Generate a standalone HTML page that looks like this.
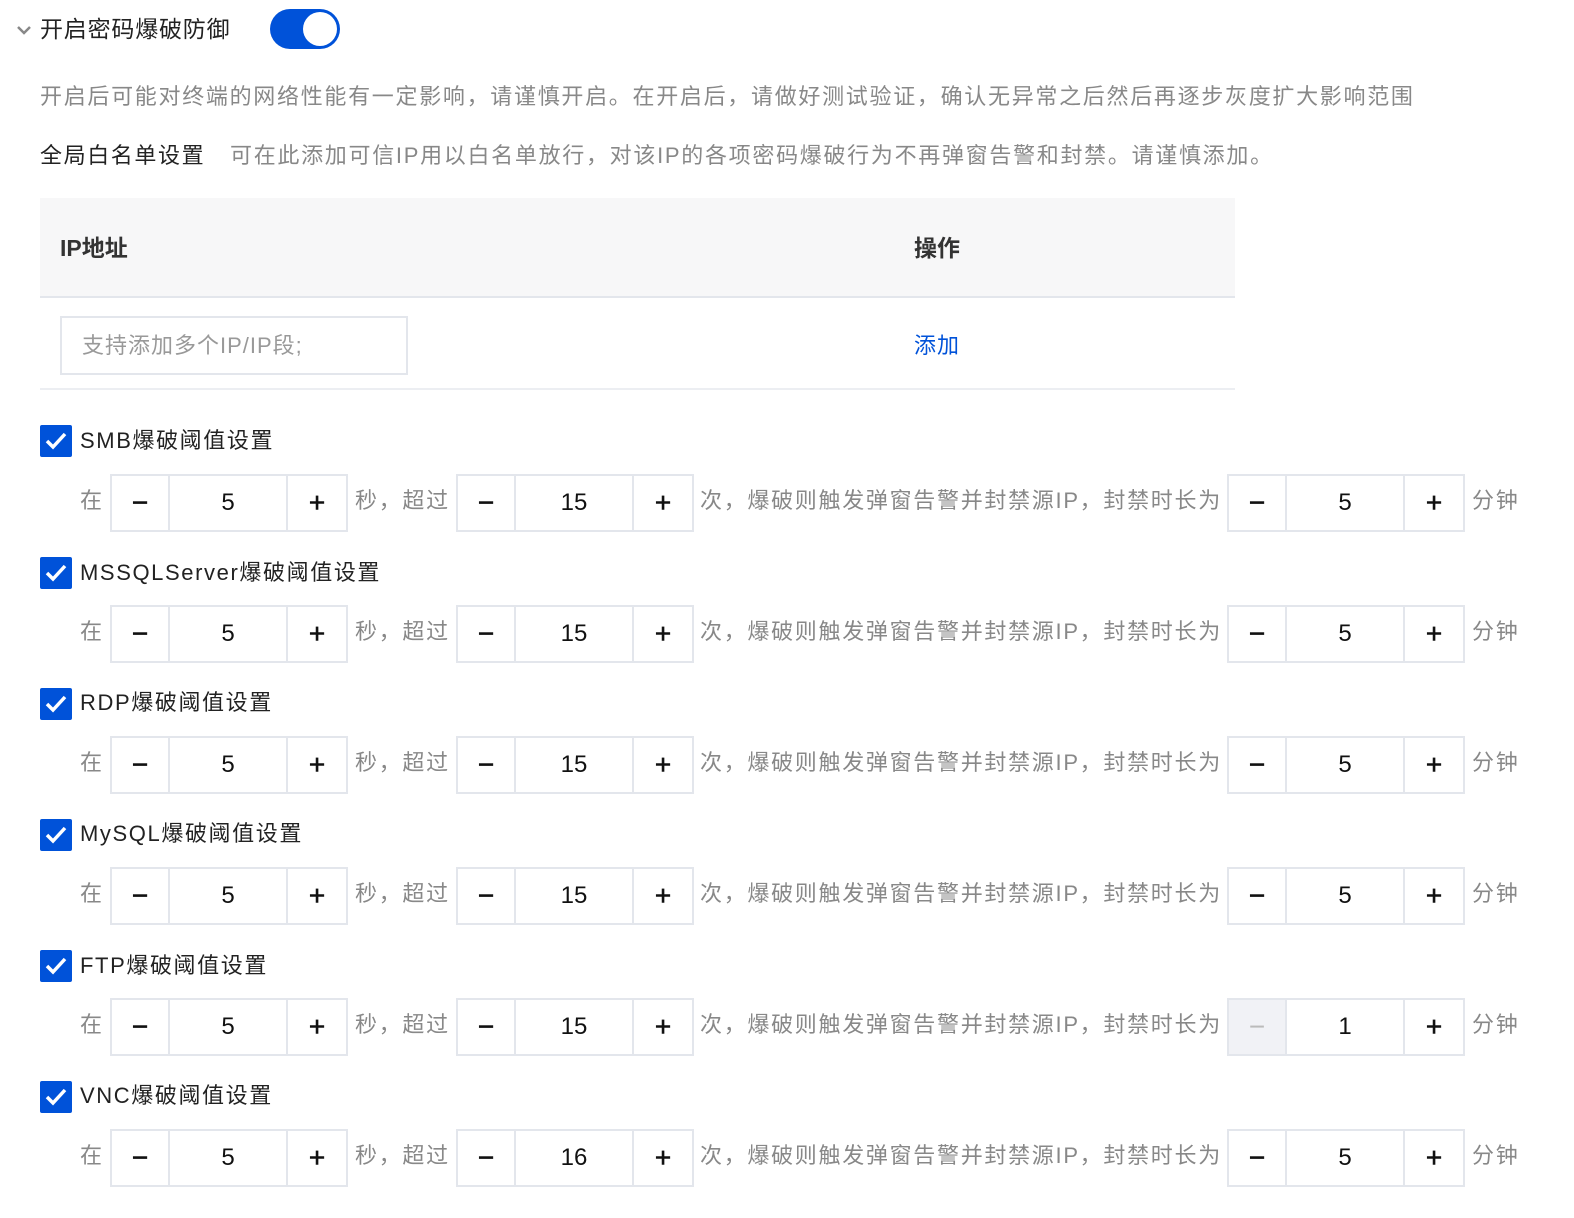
<!DOCTYPE html>
<html><head><meta charset="utf-8">
<style>
*{margin:0;padding:0;box-sizing:border-box}
body{width:1574px;height:1218px;background:#fff;font-family:"Liberation Sans","Noto Sans CJK SC",sans-serif;position:relative;overflow:hidden;color:#222}
.a{position:absolute;white-space:nowrap}
.g{color:#888;font-size:22px;line-height:30px;letter-spacing:1.7px}
.st{position:absolute;height:58px;width:238px;border:2px solid #e3e6ec;display:flex;background:#fff}
.st div{display:flex;align-items:center;justify-content:center;font-size:24px;color:#111}
.st .m,.st .p{font-size:28px;font-weight:500;-webkit-text-stroke:0.6px #111}
.st .m{width:58px;border-right:2px solid #e3e6ec}
.st .v{width:118px;border-right:2px solid #e3e6ec}
.st .p{width:58px}
.st .dis{background:#f1f2f6;color:#bbb;-webkit-text-stroke:0}
.cb{position:absolute;left:40px;width:32px;height:32px;background:#0052d9;border-radius:2px}
.cb svg{position:absolute;left:5px;top:6px}
.lab{position:absolute;left:80px;font-size:22px;line-height:30px;color:#222;letter-spacing:1.6px}
</style></head><body>
<svg class="a" style="left:16px;top:24px" width="16" height="12" viewBox="0 0 16 12"><path d="M2 3 L8 9 L14 3" stroke="#888" stroke-width="2.5" fill="none"/></svg>
<div class="a" style="left:40px;top:14px;font-size:23px;line-height:30px;color:#222;letter-spacing:0.8px">开启密码爆破防御</div>
<div class="a" style="left:270px;top:9px;width:70px;height:40px;border-radius:20px;background:#0052d9"></div>
<div class="a" style="left:303px;top:12px;width:34px;height:34px;border-radius:17px;background:#fff"></div>
<div class="a g" style="left:40px;top:82px">开启后可能对终端的网络性能有一定影响，请谨慎开启。在开启后，请做好测试验证，确认无异常之后然后再逐步灰度扩大影响范围</div>
<div class="a" style="left:40px;top:141px;font-size:22px;line-height:30px;color:#222;letter-spacing:1.6px">全局白名单设置</div>
<div class="a g" style="left:230px;top:141px">可在此添加可信IP用以白名单放行，对该IP的各项密码爆破行为不再弹窗告警和封禁。请谨慎添加。</div>
<div class="a" style="left:40px;top:198px;width:1195px;height:100px;background:#f7f7f8;border-bottom:2px solid #e3e6ec"></div>
<div class="a" style="left:60px;top:233px;font-size:23px;line-height:30px;font-weight:bold;color:#333">IP地址</div>
<div class="a" style="left:914px;top:233px;font-size:23px;line-height:30px;font-weight:bold;color:#333">操作</div>
<div class="a" style="left:60px;top:316px;width:348px;height:59px;border:2px solid #e3e6ec"></div>
<div class="a g" style="left:82px;top:331px;color:#999;letter-spacing:1px">支持添加多个IP/IP段;</div>
<div class="a" style="left:914px;top:331px;font-size:22px;line-height:30px;color:#0052d9;letter-spacing:1px">添加</div>
<div class="a" style="left:40px;top:388px;width:1195px;height:2px;background:#eceef2"></div>

<div class="cb" style="top:425px"><svg width="22" height="20" viewBox="0 0 22 20"><path d="M2 10 L8 16 L20 3" stroke="#fff" stroke-width="3.5" fill="none"/></svg></div>
<div class="lab" style="top:426px">SMB爆破阈值设置</div>
<div class="a g" style="left:80px;top:486px">在</div>
<div class="st" style="left:110px;top:474px"><div class="m">−</div><div class="v">5</div><div class="p">+</div></div>
<div class="a g" style="left:355px;top:486px">秒，超过</div>
<div class="st" style="left:456px;top:474px"><div class="m">−</div><div class="v">15</div><div class="p">+</div></div>
<div class="a g" style="left:700px;top:486px">次，爆破则触发弹窗告警并封禁源IP，封禁时长为</div>
<div class="st" style="left:1227px;top:474px"><div class="m">−</div><div class="v">5</div><div class="p">+</div></div>
<div class="a g" style="left:1472px;top:486px">分钟</div>

<div class="cb" style="top:557px"><svg width="22" height="20" viewBox="0 0 22 20"><path d="M2 10 L8 16 L20 3" stroke="#fff" stroke-width="3.5" fill="none"/></svg></div>
<div class="lab" style="top:558px">MSSQLServer爆破阈值设置</div>
<div class="a g" style="left:80px;top:617px">在</div>
<div class="st" style="left:110px;top:605px"><div class="m">−</div><div class="v">5</div><div class="p">+</div></div>
<div class="a g" style="left:355px;top:617px">秒，超过</div>
<div class="st" style="left:456px;top:605px"><div class="m">−</div><div class="v">15</div><div class="p">+</div></div>
<div class="a g" style="left:700px;top:617px">次，爆破则触发弹窗告警并封禁源IP，封禁时长为</div>
<div class="st" style="left:1227px;top:605px"><div class="m">−</div><div class="v">5</div><div class="p">+</div></div>
<div class="a g" style="left:1472px;top:617px">分钟</div>

<div class="cb" style="top:688px"><svg width="22" height="20" viewBox="0 0 22 20"><path d="M2 10 L8 16 L20 3" stroke="#fff" stroke-width="3.5" fill="none"/></svg></div>
<div class="lab" style="top:688px">RDP爆破阈值设置</div>
<div class="a g" style="left:80px;top:748px">在</div>
<div class="st" style="left:110px;top:736px"><div class="m">−</div><div class="v">5</div><div class="p">+</div></div>
<div class="a g" style="left:355px;top:748px">秒，超过</div>
<div class="st" style="left:456px;top:736px"><div class="m">−</div><div class="v">15</div><div class="p">+</div></div>
<div class="a g" style="left:700px;top:748px">次，爆破则触发弹窗告警并封禁源IP，封禁时长为</div>
<div class="st" style="left:1227px;top:736px"><div class="m">−</div><div class="v">5</div><div class="p">+</div></div>
<div class="a g" style="left:1472px;top:748px">分钟</div>

<div class="cb" style="top:819px"><svg width="22" height="20" viewBox="0 0 22 20"><path d="M2 10 L8 16 L20 3" stroke="#fff" stroke-width="3.5" fill="none"/></svg></div>
<div class="lab" style="top:819px">MySQL爆破阈值设置</div>
<div class="a g" style="left:80px;top:879px">在</div>
<div class="st" style="left:110px;top:867px"><div class="m">−</div><div class="v">5</div><div class="p">+</div></div>
<div class="a g" style="left:355px;top:879px">秒，超过</div>
<div class="st" style="left:456px;top:867px"><div class="m">−</div><div class="v">15</div><div class="p">+</div></div>
<div class="a g" style="left:700px;top:879px">次，爆破则触发弹窗告警并封禁源IP，封禁时长为</div>
<div class="st" style="left:1227px;top:867px"><div class="m">−</div><div class="v">5</div><div class="p">+</div></div>
<div class="a g" style="left:1472px;top:879px">分钟</div>

<div class="cb" style="top:950px"><svg width="22" height="20" viewBox="0 0 22 20"><path d="M2 10 L8 16 L20 3" stroke="#fff" stroke-width="3.5" fill="none"/></svg></div>
<div class="lab" style="top:951px">FTP爆破阈值设置</div>
<div class="a g" style="left:80px;top:1010px">在</div>
<div class="st" style="left:110px;top:998px"><div class="m">−</div><div class="v">5</div><div class="p">+</div></div>
<div class="a g" style="left:355px;top:1010px">秒，超过</div>
<div class="st" style="left:456px;top:998px"><div class="m">−</div><div class="v">15</div><div class="p">+</div></div>
<div class="a g" style="left:700px;top:1010px">次，爆破则触发弹窗告警并封禁源IP，封禁时长为</div>
<div class="st" style="left:1227px;top:998px"><div class="m dis">−</div><div class="v">1</div><div class="p">+</div></div>
<div class="a g" style="left:1472px;top:1010px">分钟</div>

<div class="cb" style="top:1081px"><svg width="22" height="20" viewBox="0 0 22 20"><path d="M2 10 L8 16 L20 3" stroke="#fff" stroke-width="3.5" fill="none"/></svg></div>
<div class="lab" style="top:1081px">VNC爆破阈值设置</div>
<div class="a g" style="left:80px;top:1141px">在</div>
<div class="st" style="left:110px;top:1129px"><div class="m">−</div><div class="v">5</div><div class="p">+</div></div>
<div class="a g" style="left:355px;top:1141px">秒，超过</div>
<div class="st" style="left:456px;top:1129px"><div class="m">−</div><div class="v">16</div><div class="p">+</div></div>
<div class="a g" style="left:700px;top:1141px">次，爆破则触发弹窗告警并封禁源IP，封禁时长为</div>
<div class="st" style="left:1227px;top:1129px"><div class="m">−</div><div class="v">5</div><div class="p">+</div></div>
<div class="a g" style="left:1472px;top:1141px">分钟</div>
</body></html>
